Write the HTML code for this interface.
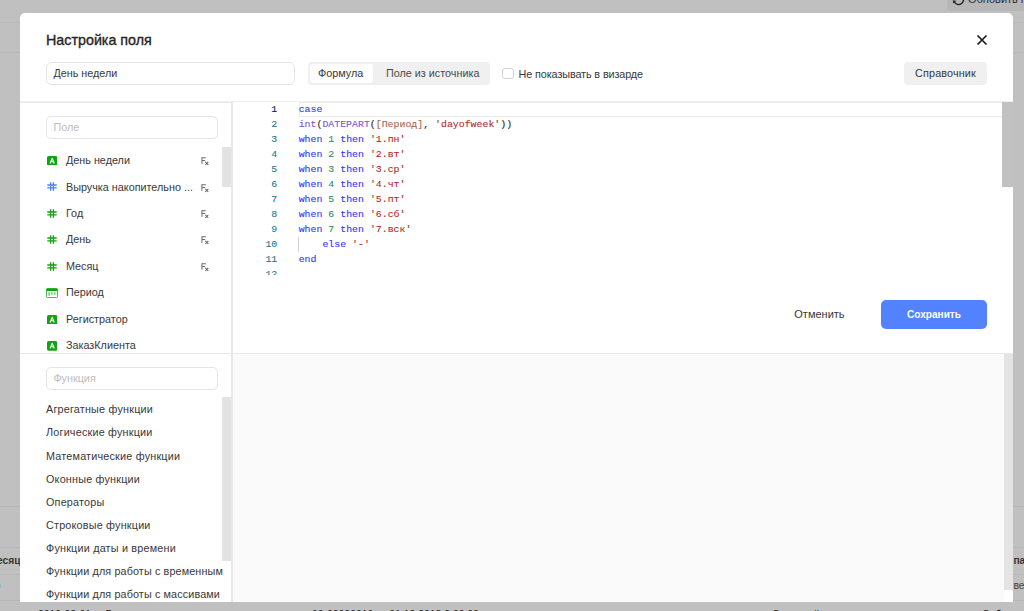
<!DOCTYPE html>
<html lang="ru">
<head>
<meta charset="utf-8">
<title>Настройка поля</title>
<style>
*{box-sizing:border-box;margin:0;padding:0}
html,body{width:1024px;height:611px;overflow:hidden}
body{background:#c0c0c0;font-family:"Liberation Sans",sans-serif;font-size:10.8px;color:#2b2b2b;position:relative}
.abs{position:absolute}
/* background page bits */
.bgline{position:absolute;background:#b8b8b8;height:1px}
.bgtxt{position:absolute;color:#383838;font-size:10.4px;white-space:nowrap}
/* modal */
#modal{position:absolute;left:20px;top:13.4px;width:993.3px;height:588.9px;background:#fff;border-radius:5px 5px 0 0;overflow:hidden}
#title{position:absolute;left:26px;top:18.7px;font-size:14.3px;color:#262626;-webkit-text-stroke:0.35px #262626;letter-spacing:0;white-space:nowrap}
.inp{position:absolute;border:1px solid #e4e4e4;border-radius:5px;background:#fff;height:23px;line-height:21.2px;padding-left:6.4px;white-space:nowrap;color:#383838}
.ph{color:#bdbdbd;line-height:20.6px}
#seg{position:absolute;left:288px;top:49px;width:182px;height:23px;background:#f0f0f0;border-radius:4px}
#seg .on{position:absolute;left:2px;top:2px;width:63px;height:19px;background:#fff;border-radius:3px}
#seg span{position:absolute;top:0;line-height:22.6px;white-space:nowrap;color:#383838}
#chk{position:absolute;left:482.2px;top:54.3px;width:11.6px;height:11.6px;border:1px solid #d2d2d2;border-radius:3px;background:#fff}
#chkl{position:absolute;left:498.6px;top:49px;line-height:24px;letter-spacing:-0.1px;white-space:nowrap;color:#383838}
#ref{position:absolute;left:884px;top:49px;width:83px;height:23px;background:#f0f0f0;border-radius:4px;text-align:center;line-height:22.8px;letter-spacing:0.15px;color:#383838}
.hline{position:absolute;height:1px;background:#e5e5e5}
.vline{position:absolute;width:1px;background:#e5e5e5}
.fld{position:absolute;left:26px;height:14px;line-height:14px;white-space:nowrap;color:#383838}
.fld .t{position:absolute;left:20px;top:0}
.fx{position:absolute;left:155px;top:1.2px;font-size:10.3px;color:#707070;letter-spacing:-0.6px}.fx b{font-size:6px;position:relative;top:1.4px;left:-0.9px}
.ico{position:absolute;left:0;top:2px;width:11px;height:10px}
.fn{position:absolute;left:26px;line-height:14px;white-space:nowrap;color:#383838;letter-spacing:0.2px}
.sb{position:absolute;background:#e3e3e3}
/* editor */
#ed{position:absolute;left:213px;top:88.9px;width:780.6px;height:250.4px;background:#fff;overflow:hidden}
.ln{position:absolute;left:0;width:44.3px;-webkit-text-stroke:0.1px;text-align:right;font-family:"Liberation Mono",monospace;font-size:9.9px;line-height:15px;color:#237893}
.cl{position:absolute;left:65.7px;-webkit-text-stroke:0.1px;font-family:"Liberation Mono",monospace;font-size:9.9px;line-height:15px;white-space:pre;color:#222}
.k{color:#3333ff}.f{color:#7a55d8}.n{color:#2f8a5f}.s{color:#b22a2a}.b{color:#a8664a}
#cancel{position:absolute;left:774.3px;top:293.9px;line-height:14px;font-size:11px;color:#383838}
#save{position:absolute;left:861px;top:286.2px;width:106px;height:29.7px;border-radius:5px;background:#5282ff;color:#fff;text-align:center;line-height:30.4px;font-weight:bold;font-size:10.1px}
#gray{position:absolute;left:213px;top:340.6px;width:771px;height:249px;background:#fafafa}
</style>
</head>
<body>
<!-- background page remnants -->
<div class="bgline" style="left:0;top:22px;width:1024px"></div>
<div class="bgline" style="left:0;top:52px;width:1024px"></div>
<div class="bgline" style="left:0;top:506px;width:1024px"></div>
<div class="bgline" style="left:0;top:547px;width:1024px"></div>
<div class="bgline" style="left:0;top:574px;width:1024px"></div>
<div class="bgline" style="left:0;top:600px;width:1024px"></div>
<div class="abs" style="left:947px;top:-6px;width:90px;height:17px;border-radius:4px;background:#b7b7b7"></div>
<svg class="abs" style="left:950px;top:-8px" width="16" height="16" viewBox="0 0 16 16"><path d="M12.9 5.6 A4.6 4.6 0 0 1 4.6 10" stroke="#1e1e1e" stroke-width="1.35" fill="none"/><path d="M2.6 8.4 L6.3 8.7 L3.5 11.6 Z" fill="#1e1e1e"/></svg>
<div class="bgtxt" style="left:968px;top:-7px;font-size:11px;color:#2a2a3a">Обновить поля</div>
<div class="bgtxt" style="left:-10.5px;top:555.4px;font-weight:bold;font-size:10.2px;color:#363636">месяц</div>
<div class="bgtxt" style="left:1013.4px;top:555.4px;font-weight:bold;font-size:10.2px;color:#363636">партнер</div>
<div class="bgtxt" style="left:1013.4px;top:580px;color:#4a4238">вер</div>
<div class="abs" style="left:0;top:584px;width:1.2px;height:4px;background:#8fbccb"></div>
<div class="bgtxt" style="left:38px;top:608.7px;color:#222">2019-03-01 &nbsp;&nbsp;&nbsp; Реализация</div>
<div class="bgtxt" style="left:312px;top:608.7px;color:#222">00-00000010 от 01.12.2018 0:00:00</div>
<div class="bgtxt" style="left:772px;top:608.7px;color:#222">Основной склад</div>
<div class="bgtxt" style="left:982px;top:608.7px;color:#222">Собс</div>
<div id="modal">
  <div id="title">Настройка поля</div>
  <svg class="abs" style="left:956.2px;top:20.4px" width="12" height="12" viewBox="0 0 12 12"><path d="M1.5 1.5 L10.5 10.5 M10.5 1.5 L1.5 10.5" stroke="#1a1a1a" stroke-width="1.7" fill="none"/></svg>
  <div class="inp" style="left:26px;top:49px;width:249px">День недели</div>
  <div id="seg"><div class="on"></div><span style="left:10px">Формула</span><span style="left:78px;color:#4a4a4a">Поле из источника</span></div>
  <div id="chk"></div><div id="chkl">Не показывать в визарде</div>
  <div id="ref">Справочник</div>
  <div class="hline" style="left:0;top:87.8px;width:994px;height:2px;background:linear-gradient(#f4f4f4,#e4e4e4)"></div>

  <!-- left column -->
  <div class="vline" style="left:211.4px;top:89px;height:500px;width:1.6px;background:#e8e8e8"></div>
  <div class="inp ph" style="left:26px;top:103px;width:172px">Поле</div>
  <div class="fld" style="top:139.7px"><svg class="ico" viewBox="0 0 10.4 9.7" style="left:0.8px;top:2.7px;width:10.4px;height:9.7px"><rect width="10.4" height="9.7" rx="1.6" fill="#12a312"/><path d="M3.1 7.5 L5.2 2.3 L7.3 7.5 M3.9 5.8 H6.5" stroke="#fff" stroke-width="1.1" fill="none" stroke-linejoin="round"/></svg><span class="t">День недели</span><svg class="abs" style="left:155.2px;top:4px" width="8" height="9" viewBox="0 0 8 9"><path d="M0.95 0.3 V6.8 M0.95 0.78 H4.8 M0.95 3.55 H4.2" stroke="#6a6a6a" stroke-width="1" fill="none"/><path d="M4.3 4.9 L7.3 8 M7.3 4.9 L4.3 8" stroke="#666" stroke-width="1.05" fill="none"/></svg></div>
  <div class="fld" style="top:166.2px"><svg class="ico" viewBox="0 0 10 9" style="left:1px;top:2.7px;width:10px;height:9px"><path d="M3.7 0.3 V8.7 M6.4 0.3 V8.7 M0.3 3 H9.7 M0.3 5.8 H9.7" stroke="#4d7fff" stroke-width="1.3" fill="none"/></svg><span class="t">Выручка накопительно ...</span><svg class="abs" style="left:155.2px;top:4px" width="8" height="9" viewBox="0 0 8 9"><path d="M0.95 0.3 V6.8 M0.95 0.78 H4.8 M0.95 3.55 H4.2" stroke="#6a6a6a" stroke-width="1" fill="none"/><path d="M4.3 4.9 L7.3 8 M7.3 4.9 L4.3 8" stroke="#666" stroke-width="1.05" fill="none"/></svg></div>
  <div class="fld" style="top:192.7px"><svg class="ico" viewBox="0 0 10 9" style="left:1px;top:2.7px;width:10px;height:9px"><path d="M3.7 0.3 V8.7 M6.4 0.3 V8.7 M0.3 3 H9.7 M0.3 5.8 H9.7" stroke="#14a114" stroke-width="1.3" fill="none"/></svg><span class="t">Год</span><svg class="abs" style="left:155.2px;top:4px" width="8" height="9" viewBox="0 0 8 9"><path d="M0.95 0.3 V6.8 M0.95 0.78 H4.8 M0.95 3.55 H4.2" stroke="#6a6a6a" stroke-width="1" fill="none"/><path d="M4.3 4.9 L7.3 8 M7.3 4.9 L4.3 8" stroke="#666" stroke-width="1.05" fill="none"/></svg></div>
  <div class="fld" style="top:219.1px"><svg class="ico" viewBox="0 0 10 9" style="left:1px;top:2.7px;width:10px;height:9px"><path d="M3.7 0.3 V8.7 M6.4 0.3 V8.7 M0.3 3 H9.7 M0.3 5.8 H9.7" stroke="#14a114" stroke-width="1.3" fill="none"/></svg><span class="t">День</span><svg class="abs" style="left:155.2px;top:4px" width="8" height="9" viewBox="0 0 8 9"><path d="M0.95 0.3 V6.8 M0.95 0.78 H4.8 M0.95 3.55 H4.2" stroke="#6a6a6a" stroke-width="1" fill="none"/><path d="M4.3 4.9 L7.3 8 M7.3 4.9 L4.3 8" stroke="#666" stroke-width="1.05" fill="none"/></svg></div>
  <div class="fld" style="top:245.6px"><svg class="ico" viewBox="0 0 10 9" style="left:1px;top:2.7px;width:10px;height:9px"><path d="M3.7 0.3 V8.7 M6.4 0.3 V8.7 M0.3 3 H9.7 M0.3 5.8 H9.7" stroke="#14a114" stroke-width="1.3" fill="none"/></svg><span class="t">Месяц</span><svg class="abs" style="left:155.2px;top:4px" width="8" height="9" viewBox="0 0 8 9"><path d="M0.95 0.3 V6.8 M0.95 0.78 H4.8 M0.95 3.55 H4.2" stroke="#6a6a6a" stroke-width="1" fill="none"/><path d="M4.3 4.9 L7.3 8 M7.3 4.9 L4.3 8" stroke="#666" stroke-width="1.05" fill="none"/></svg></div>
  <div class="fld" style="top:272.1px"><svg class="ico" viewBox="0 0 12 10" style="left:0;top:2.7px;width:12px;height:10px"><rect x="0.5" y="0.5" width="11" height="9" rx="1.2" fill="#fff" stroke="#3ab23a" stroke-width="0.9"/><rect x="0.5" y="0.5" width="11" height="2.6" fill="#12a312"/><rect x="2.3" y="4.2" width="1.6" height="3.6" fill="#7fd07f"/><rect x="5.1" y="4.2" width="1.6" height="2.6" fill="#7fd07f"/><rect x="7.9" y="4.2" width="1.6" height="2.6" fill="#7fd07f"/></svg><span class="t">Период</span></div>
  <div class="fld" style="top:298.6px"><svg class="ico" viewBox="0 0 10.4 9.7" style="left:0.8px;top:2.7px;width:10.4px;height:9.7px"><rect width="10.4" height="9.7" rx="1.6" fill="#12a312"/><path d="M3.1 7.5 L5.2 2.3 L7.3 7.5 M3.9 5.8 H6.5" stroke="#fff" stroke-width="1.1" fill="none" stroke-linejoin="round"/></svg><span class="t">Регистратор</span></div>
  <div class="fld" style="top:325.1px"><svg class="ico" viewBox="0 0 10.4 9.7" style="left:0.8px;top:2.7px;width:10.4px;height:9.7px"><rect width="10.4" height="9.7" rx="1.6" fill="#12a312"/><path d="M3.1 7.5 L5.2 2.3 L7.3 7.5 M3.9 5.8 H6.5" stroke="#fff" stroke-width="1.1" fill="none" stroke-linejoin="round"/></svg><span class="t">ЗаказКлиента</span></div>
  <div class="sb" style="left:202px;top:133.6px;width:9.4px;height:40px"></div>
  <div class="hline" style="left:0;top:339.6px;width:994px;background:#e9e9e9"></div>
  <div class="inp ph" style="left:26px;top:354px;width:172px">Функция</div>
  <div class="fn" style="top:388.90px">Агрегатные функции</div>
  <div class="fn" style="top:412.01px">Логические функции</div>
  <div class="fn" style="top:435.12px">Математические функции</div>
  <div class="fn" style="top:458.23px">Оконные функции</div>
  <div class="fn" style="top:481.34px">Операторы</div>
  <div class="fn" style="top:504.45px">Строковые функции</div>
  <div class="fn" style="top:527.56px">Функции даты и времени</div>
  <div class="fn" style="top:550.67px;letter-spacing:0.12px">Функции для работы с временным</div>
  <div class="fn" style="top:573.78px;letter-spacing:0.12px">Функции для работы с массивами</div>
  <div class="sb" style="left:202px;top:383.6px;width:9.4px;height:164px"></div>

  <!-- editor -->
  <div id="ed">
    <div class="abs" style="left:65.6px;top:-0.6px;width:716px;height:15.4px;border:1.3px solid #ececec"></div>
    <div class="ln" style="top:0;color:#0b216f">1</div><div class="cl" style="top:0"><span class="k">case</span></div>
    <div class="ln" style="top:15px">2</div><div class="cl" style="top:15px"><span class="f">int</span>(<span class="f">DATEPART</span>(<span class="b">[Период]</span>, <span class="s">'dayofweek'</span>))</div>
    <div class="ln" style="top:30px">3</div><div class="cl" style="top:30px"><span class="k">when</span> <span class="n">1</span> <span class="k">then</span> <span class="s">'1.пн'</span></div>
    <div class="ln" style="top:45px">4</div><div class="cl" style="top:45px"><span class="k">when</span> <span class="n">2</span> <span class="k">then</span> <span class="s">'2.вт'</span></div>
    <div class="ln" style="top:60px">5</div><div class="cl" style="top:60px"><span class="k">when</span> <span class="n">3</span> <span class="k">then</span> <span class="s">'3.ср'</span></div>
    <div class="ln" style="top:75px">6</div><div class="cl" style="top:75px"><span class="k">when</span> <span class="n">4</span> <span class="k">then</span> <span class="s">'4.чт'</span></div>
    <div class="ln" style="top:90px">7</div><div class="cl" style="top:90px"><span class="k">when</span> <span class="n">5</span> <span class="k">then</span> <span class="s">'5.пт'</span></div>
    <div class="ln" style="top:105px">8</div><div class="cl" style="top:105px"><span class="k">when</span> <span class="n">6</span> <span class="k">then</span> <span class="s">'6.сб'</span></div>
    <div class="ln" style="top:120px">9</div><div class="cl" style="top:120px"><span class="k">when</span> <span class="n">7</span> <span class="k">then</span> <span class="s">'7.вск'</span></div>
    <div class="ln" style="top:135px">10</div><div class="cl" style="top:135px">    <span class="k">else</span> <span class="s">'-'</span></div>
    <div class="ln" style="top:150px">11</div><div class="cl" style="top:150px"><span class="k">end</span></div>
    <div class="ln" style="top:165px">12</div>
    <div class="abs" style="left:0;top:173px;width:780px;height:77px;background:#fff"></div>
    <div class="abs" style="left:65px;top:135px;width:1px;height:15px;background:#d3d3d3"></div>
  </div>
  <div id="cancel">Отменить</div>
  <div id="save">Сохранить</div>
  <div id="gray"></div>
  <div class="sb" style="left:984px;top:340.2px;width:10px;height:236px;background:#e4e4e4"></div>
  <div class="abs" style="left:982px;top:88.6px;width:12px;height:85px;background:#c1c1c1"></div>
</div>
</body>
</html>
